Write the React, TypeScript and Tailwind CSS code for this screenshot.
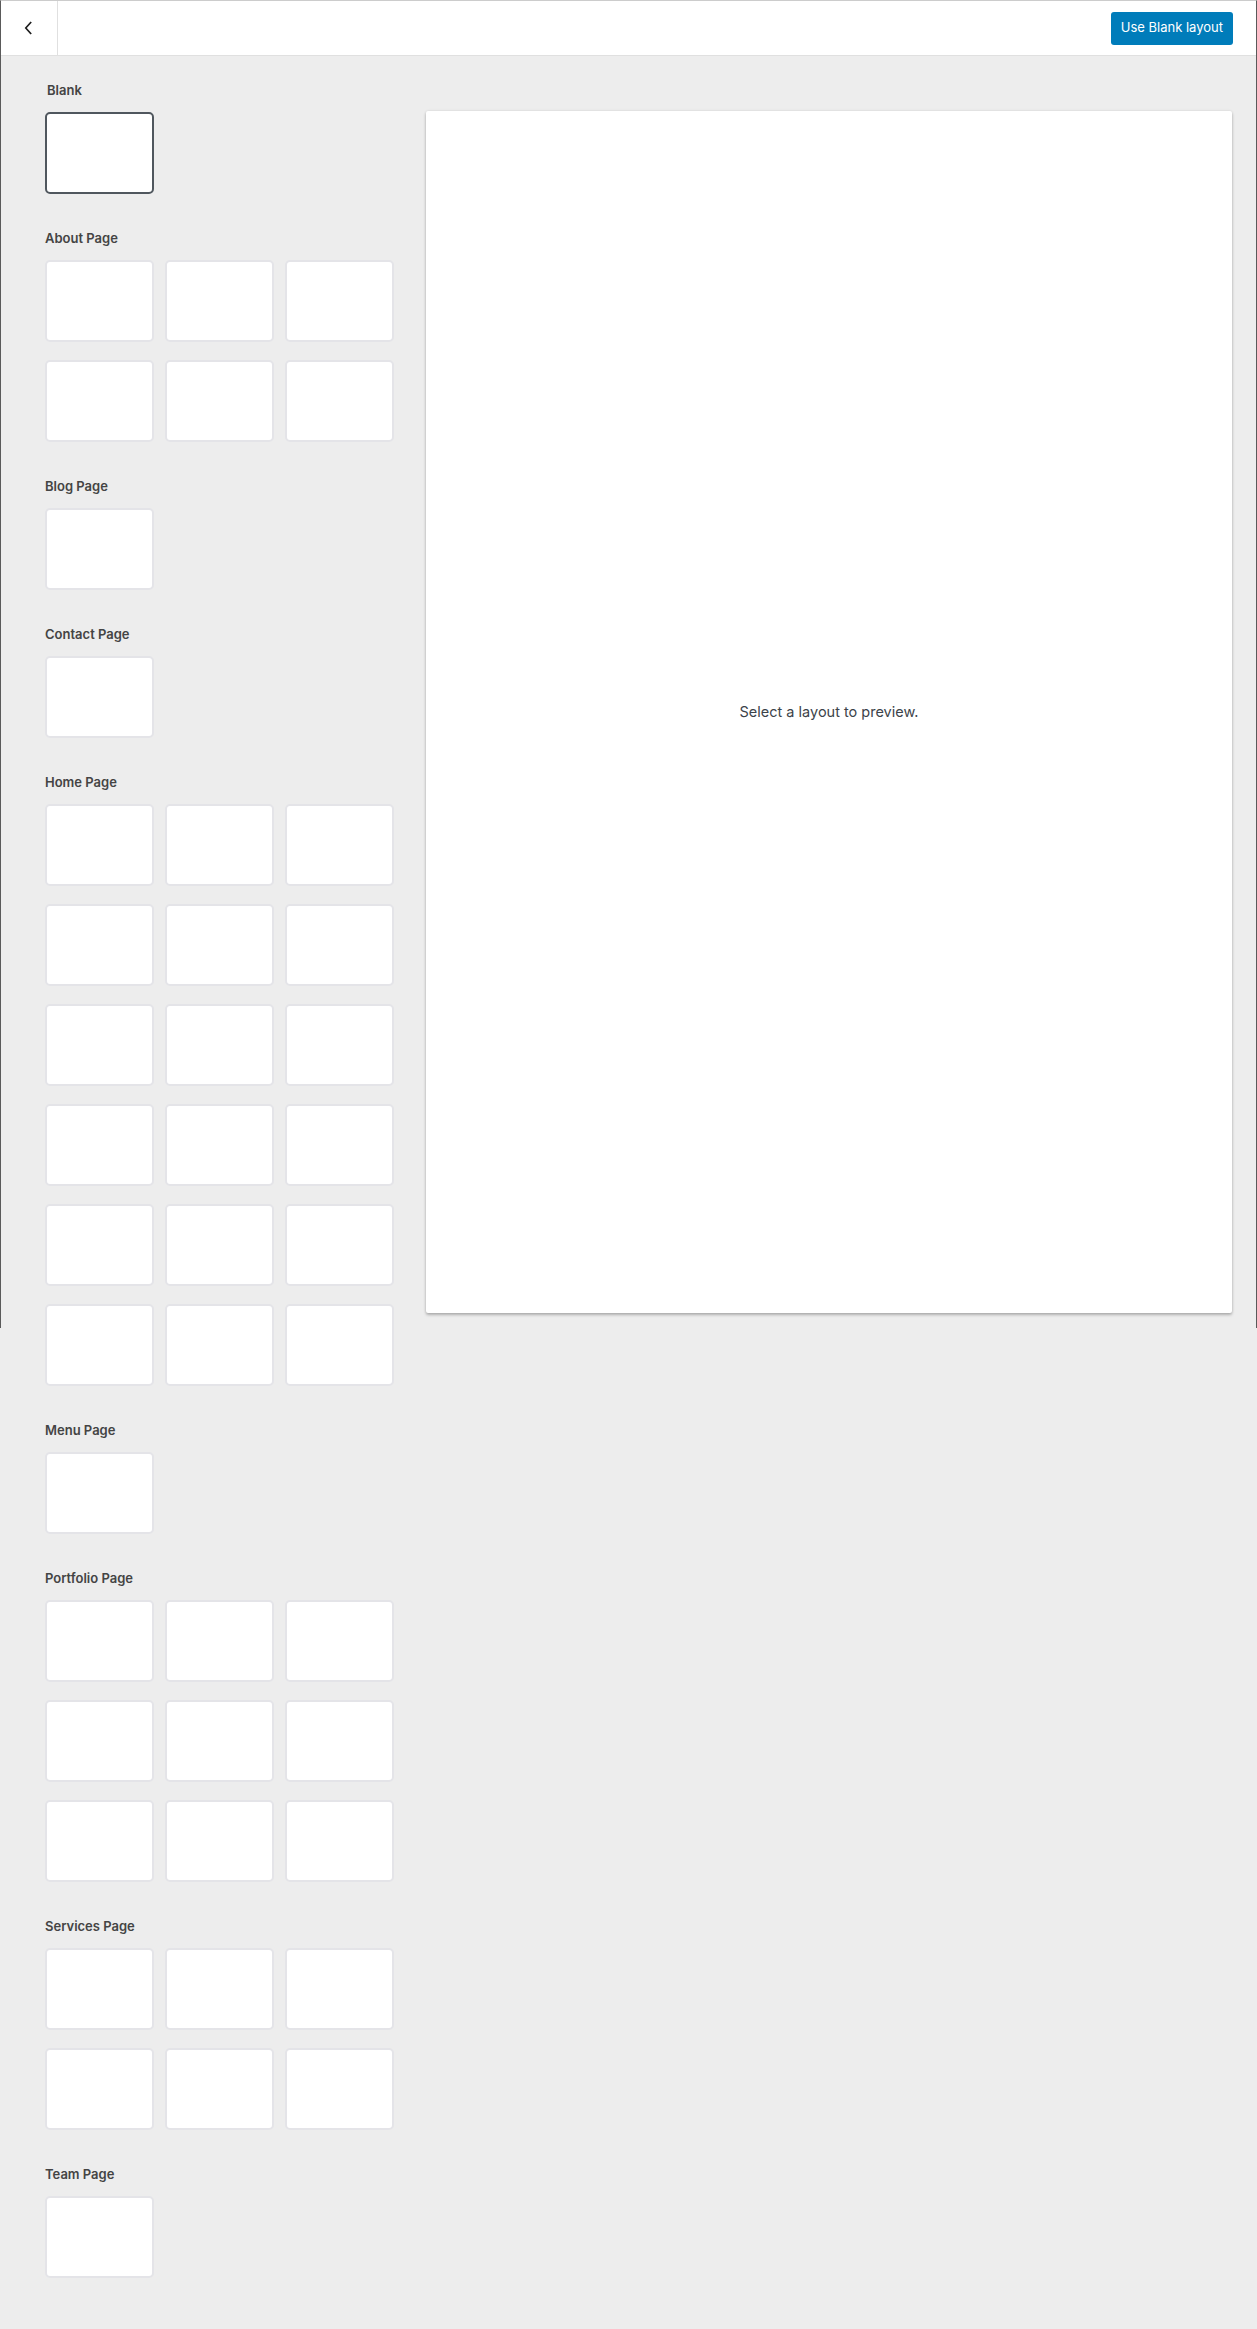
import React from 'react';

interface Section {
  title: string;
  count: number;
}

const sections: Section[] = [
  { title: 'About Page', count: 6 },
  { title: 'Blog Page', count: 1 },
  { title: 'Contact Page', count: 1 },
  { title: 'Home Page', count: 18 },
  { title: 'Menu Page', count: 1 },
  { title: 'Portfolio Page', count: 9 },
  { title: 'Services Page', count: 6 },
  { title: 'Team Page', count: 1 },
];

const font = { fontFamily: 'Inter, "Noto Sans", sans-serif' };

const LayoutCard: React.FC<{ selected?: boolean }> = ({ selected }) => (
  <button
    className={`block w-[109px] h-[82px] rounded-[5px] bg-white border-2 ${
      selected ? 'border-[#50575e]' : 'border-[#e4e4e8]'
    }`}
  />
);

const SectionBlock: React.FC<{ title: string; count: number }> = ({ title, count }) => (
  <div className="mb-[36px]">
    <h3 className="text-[13px] leading-[16px] font-semibold text-[#444] mb-[14px]">{title}</h3>
    <div className="grid grid-cols-[109px_109px_109px] gap-x-[11px] gap-y-[18px]">
      {Array.from({ length: count }).map((_, i) => (
        <LayoutCard key={i} />
      ))}
    </div>
  </div>
);

export default function App() {
  return (
    <div className="min-h-[2329px] bg-[#ededed]" style={font}>
      <div className="h-[1328px] border-x border-[#5a5a5a] border-t border-t-[#cccccc]">
        <header className="h-[55px] bg-white border-b border-[#e0e0e0] flex items-center">
          <button className="w-[57px] h-full border-r border-[#e0e0e0] flex items-center justify-center text-[#1e1e1e]">
            <svg width="26" height="26" viewBox="0 0 24 24" fill="currentColor">
              <path d="M14.6 7l-1.2-1L8 12l5.4 6 1.2-1-4.6-5z" />
            </svg>
          </button>
          <div className="flex-1" />
          <button className="mr-[23px] h-[33px] px-[10px] rounded-[3px] bg-[#007cba] text-white text-[13px]">
            Use Blank layout
          </button>
        </header>

        <div className="flex items-start">
          <div className="w-[425px] pl-[44px] pt-[26px] shrink-0">
            <div className="mb-[36px]">
              <h3 className="text-[13px] leading-[16px] font-semibold text-[#444] mb-[14px] pl-[2px]">Blank</h3>
              <LayoutCard selected />
            </div>
            {sections.map((s) => (
              <SectionBlock key={s.title} title={s.title} count={s.count} />
            ))}
          </div>

          <div className="mt-[55px] w-[806px] h-[1202px] bg-white rounded-[2px] shadow-[0_2px_3px_rgba(0,0,0,0.25),0_0_3px_rgba(0,0,0,0.1)] flex items-center justify-center">
            <p className="text-[14.5px] text-[#3c434a]">Select a layout to preview.</p>
          </div>
        </div>
      </div>
    </div>
  );
}
